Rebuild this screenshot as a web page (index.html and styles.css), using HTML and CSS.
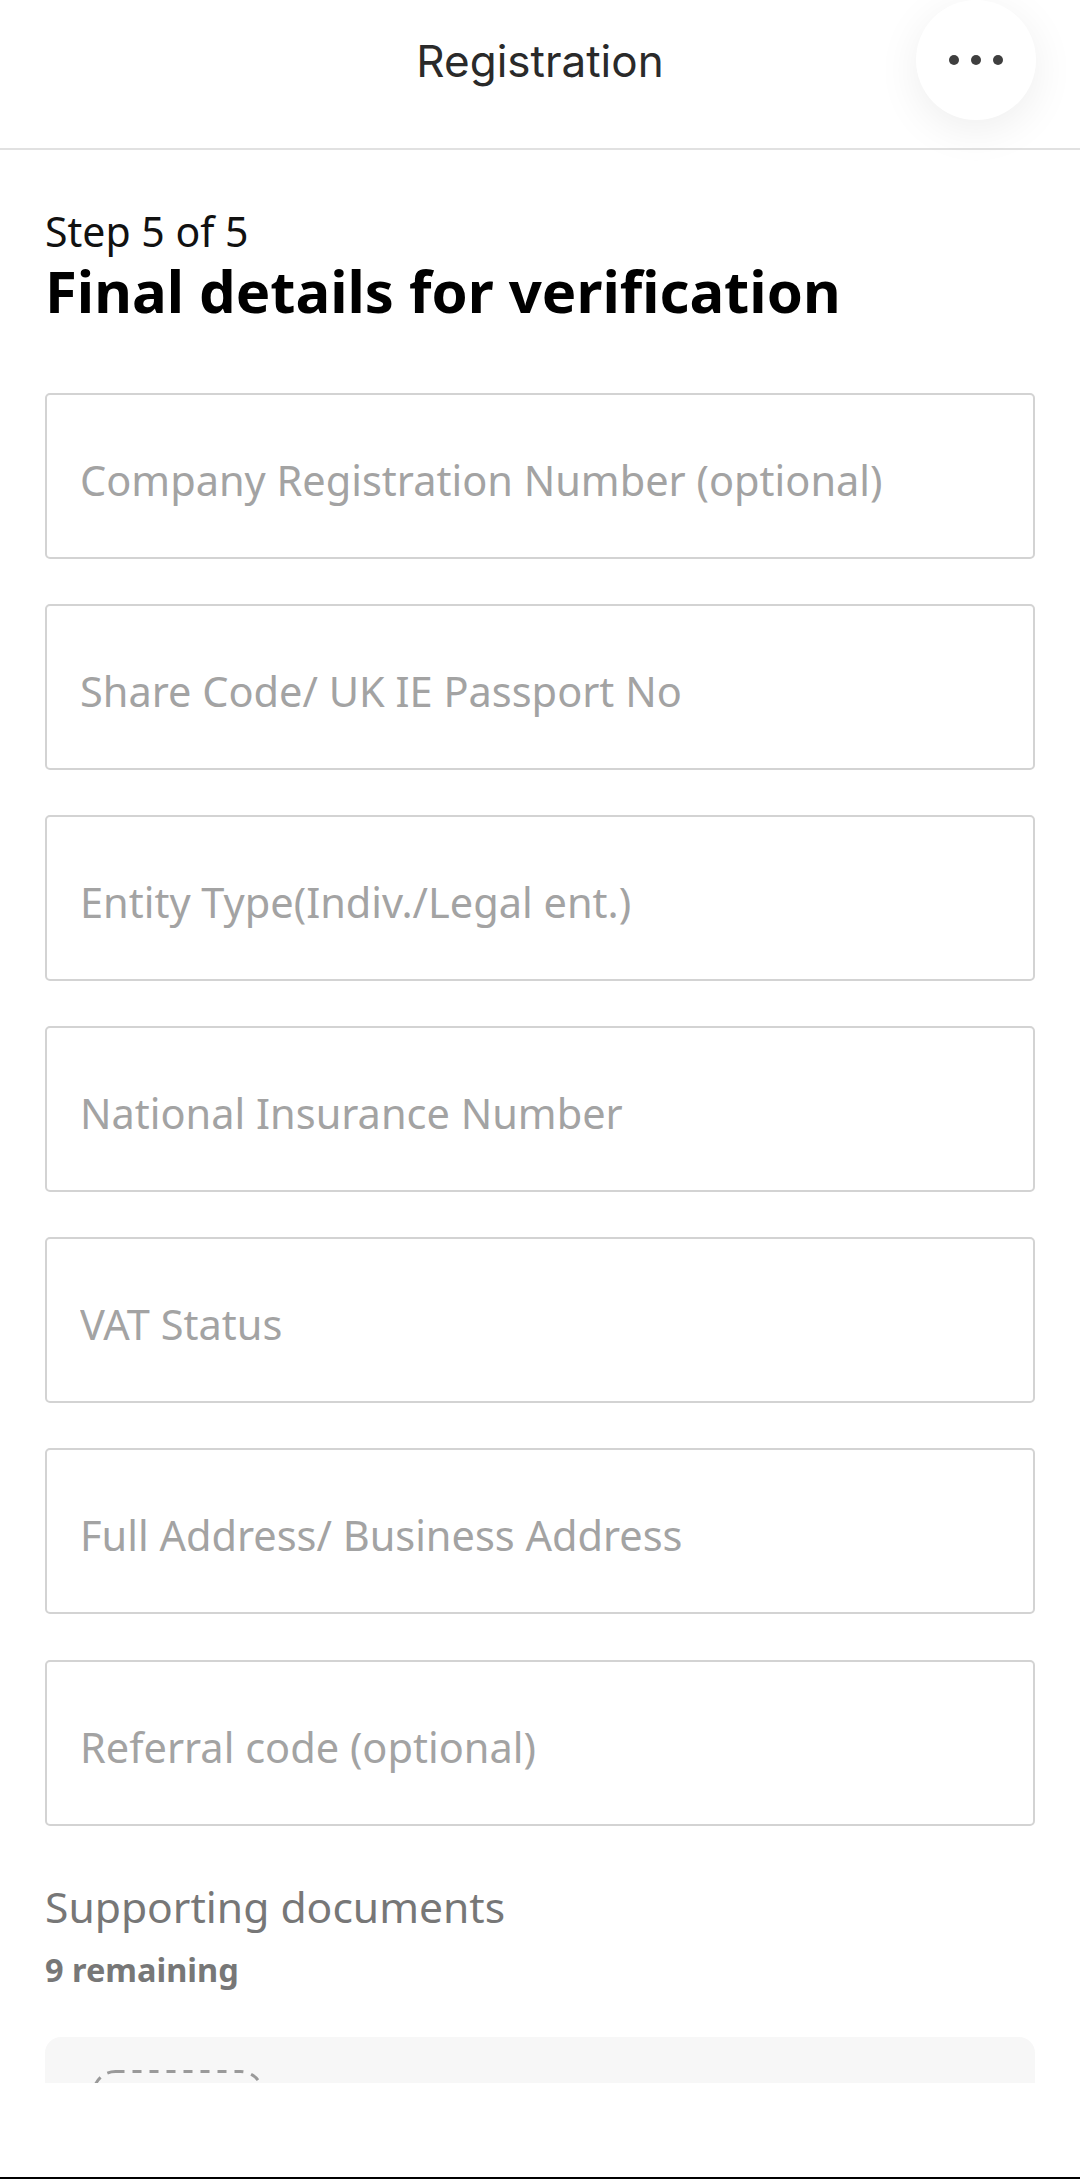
FILE: index.html
```
<!DOCTYPE html>
<html lang="en">
<head>
    <meta charset="UTF-8">
    <meta name="viewport" content="width=device-width, initial-scale=1.0">
    <title>Registration</title>
    <link rel="stylesheet" href="styles.css">
</head>
<body>
    <div class="screen">
        <header class="top-bar">
            <span></span>
            <h1 class="top-title">Registration</h1>
            <button class="more-btn" aria-label="More">
                <span class="dot"></span><span class="dot"></span><span class="dot"></span>
            </button>
        </header>

        <main class="scroll-area">
            <div class="content">
                <p class="step">Step 5 of 5</p>
                <h2 class="page-title">Final details for verification</h2>

                <form class="fields">
                    <input type="text" class="field" placeholder="Company Registration Number (optional)">
                    <input type="text" class="field" placeholder="Share Code/ UK IE Passport No">
                    <input type="text" class="field" placeholder="Entity Type(Indiv./Legal ent.)">
                    <input type="text" class="field" placeholder="National Insurance Number">
                    <input type="text" class="field" placeholder="VAT Status">
                    <input type="text" class="field" placeholder="Full Address/ Business Address">
                    <input type="text" class="field" placeholder="Referral code (optional)">
                </form>

                <h3 class="docs-title">Supporting documents</h3>
                <p class="docs-count">9 remaining</p>

                <div class="upload-card">
                    <svg class="upload-slot" width="172" height="172" viewBox="0 0 172 172">
                        <rect x="1.5" y="1.5" width="169" height="169" rx="22" fill="none" stroke="#9a9a9a" stroke-width="3" stroke-dasharray="9 8"/>
                    </svg>
                </div>
            </div>
        </main>

        <div class="bottom-bar"></div>
    </div>
</body>
</html>
```

FILE: styles.css
```
html, body {
    margin: 0;
    padding: 0;
    background: #fff;
}
body {
    font-family: "Noto Sans", "Open Sans", sans-serif;
    color: #111;
}
.screen {
    width: 1080px;
    height: 2179px;
    display: flex;
    flex-direction: column;
    overflow: hidden;
}

/* header */
.top-bar {
    height: 121px;
    padding-bottom: 27px;
    border-bottom: 2px solid #e1e1e1;
    display: grid;
    grid-template-columns: 1fr auto 1fr;
    align-items: center;
    flex-shrink: 0;
    position: relative;
    z-index: 2;
}
.top-title {
    margin: 0;
    font-family: Inter, "Noto Sans", sans-serif;
    font-weight: 400;
    font-size: 44px;
    line-height: 50px;
    color: #2a2a2a;
}
.more-btn {
    justify-self: end;
    align-self: start;
    margin-right: 44px;
    width: 120px;
    height: 120px;
    border: none;
    border-radius: 50%;
    background: #fff;
    box-shadow: 0 10px 44px rgba(0, 0, 0, 0.07);
    display: flex;
    align-items: center;
    justify-content: center;
    gap: 12px;
    padding: 0;
    cursor: pointer;
}
.dot {
    width: 10px;
    height: 10px;
    border-radius: 50%;
    background: #3f3f3f;
}

/* scrolling body */
.scroll-area {
    height: 1933px;
    overflow: hidden;
    flex-shrink: 0;
}
.content {
    padding: 56px 45px 0 45px;
}
.step {
    margin: 0;
    font-size: 41px;
    line-height: 50px;
    color: #111;
}
.page-title {
    margin: 0;
    font-size: 58px;
    line-height: 70px;
    font-weight: 700;
    color: #000;
}
.fields {
    margin-top: 67px;
    display: flex;
    flex-direction: column;
    gap: 45px;
}
.field {
    display: block;
    width: 100%;
    height: 166px;
    box-sizing: border-box;
    margin: 0;
    padding: 8px 32px 0 33px;
    border: 2px solid #d3d3d3;
    border-radius: 5px;
    background: #fff;
    font-family: inherit;
    font-size: 41.5px;
    color: #222;
    outline: none;
}
.field:last-child {
    margin-top: 1px;
}
.field::placeholder {
    color: #a3a3a3;
}
.docs-title {
    margin: 55px 0 0 0;
    font-size: 42.6px;
    line-height: 50px;
    font-weight: 400;
    color: #777;
}
.docs-count {
    margin: 19px 0 0 0;
    font-size: 32.5px;
    line-height: 40px;
    font-weight: 700;
    color: #777;
}
.upload-card {
    margin-top: 47px;
    height: 260px;
    background: #f7f7f7;
    border-radius: 16px;
    padding: 33px 47px;
    box-sizing: border-box;
}
.upload-slot {
    display: block;
}

.bottom-bar {
    height: 94px;
    border-bottom: 2px solid #000;
    background: #fff;
    flex-shrink: 0;
}
```
